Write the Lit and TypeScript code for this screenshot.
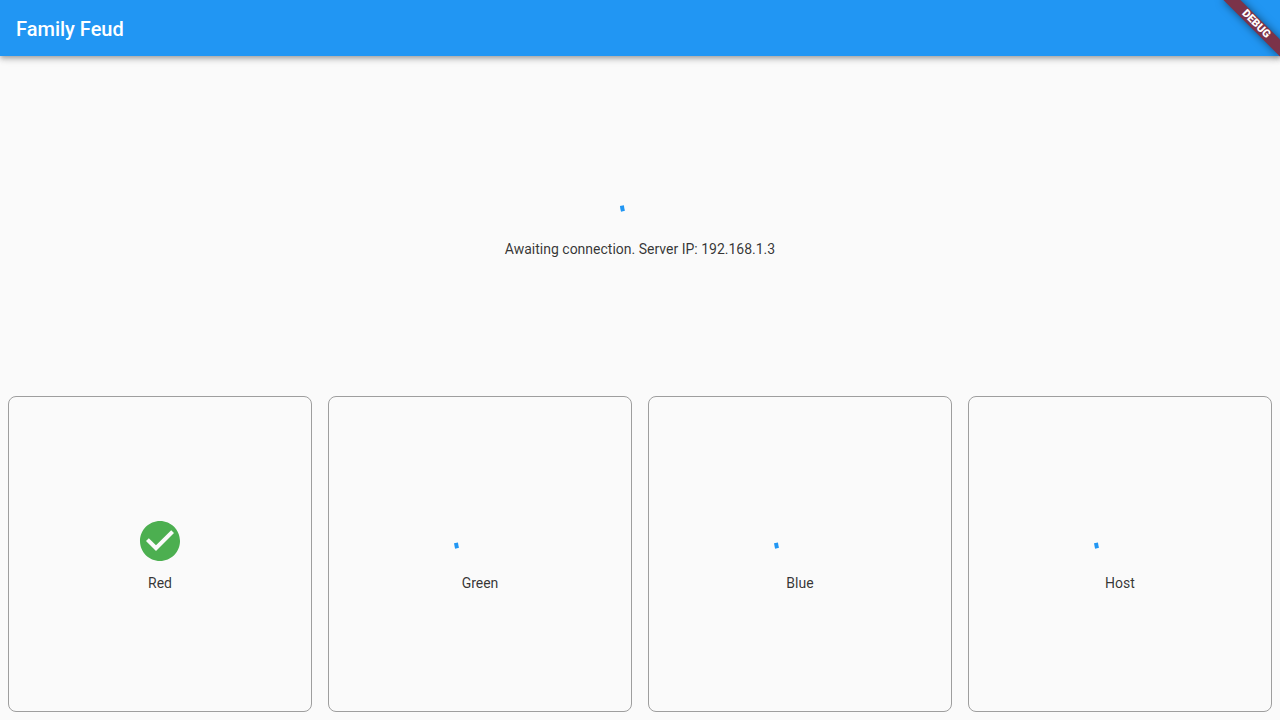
import { LitElement, html, css } from "lit";
import { customElement, property } from "lit/decorators.js";

@customElement("progress-ring")
class ProgressRing extends LitElement {
  @property({ type: Number }) size = 36;
  /** Angle of the arc's middle, in degrees clockwise from three o'clock. */
  @property({ type: Number }) angle = 169;

  static styles = css`
    :host {
      display: block;
      line-height: 0;
    }
    svg {
      overflow: visible;
    }
    path {
      fill: none;
      stroke: #2196f3;
      stroke-width: 4;
      stroke-linecap: square;
    }
  `;

  render() {
    const r = this.size / 2;
    const mid = (this.angle * Math.PI) / 180;
    const half = 0.8 / r;
    const at = (a: number) => `${r + r * Math.cos(a)} ${r + r * Math.sin(a)}`;
    return html`
      <svg
        width=${this.size}
        height=${this.size}
        role="progressbar"
        aria-label="Waiting"
      >
        <path d="M${at(mid - half)}A${r} ${r} 0 0 1 ${at(mid + half)}"></path>
      </svg>
    `;
  }
}

@customElement("player-card")
class PlayerCard extends LitElement {
  @property() name = "";
  @property({ type: Boolean }) connected = false;

  static styles = css`
    :host {
      display: flex;
      flex-direction: column;
      align-items: center;
      justify-content: center;
      gap: 10px;
      box-sizing: border-box;
      border: 1px solid #9e9e9e;
      border-radius: 8px;
    }
    .check {
      display: block;
      fill: #4caf50;
    }
  `;

  render() {
    return html`
      ${this.connected
        ? html`<svg
            class="check"
            width="48"
            height="48"
            viewBox="0 0 24 24"
            role="img"
            aria-label="Connected"
          >
            <path
              d="M12 2C6.48 2 2 6.48 2 12s4.48 10 10 10 10-4.48 10-10S17.52 2 12 2zm-2 15l-5-5 1.41-1.41L10 14.17l7.59-7.59L19 8l-9 9z"
            ></path>
          </svg>`
        : html`<progress-ring size="48"></progress-ring>`}
      <span>${this.name}</span>
    `;
  }
}

@customElement("app-root")
class AppRoot extends LitElement {
  private players = [
    { name: "Red", connected: true },
    { name: "Green", connected: false },
    { name: "Blue", connected: false },
    { name: "Host", connected: false },
  ];

  static styles = css`
    :host {
      position: relative;
      display: flex;
      flex-direction: column;
      min-height: 100vh;
      overflow: hidden;
      background: #fafafa;
      color: rgba(0, 0, 0, 0.8);
      font: 14px/16px Roboto, sans-serif;
    }
    header {
      display: flex;
      align-items: center;
      box-sizing: border-box;
      height: 56px;
      padding: 2px 16px 0;
      background: #2196f3;
      color: #fff;
      box-shadow: 0 2px 4px -1px rgba(0, 0, 0, 0.2),
        0 4px 5px 0 rgba(0, 0, 0, 0.14), 0 1px 10px 0 rgba(0, 0, 0, 0.12);
    }
    h1 {
      margin: 0;
      font-size: 20px;
      line-height: 24px;
      font-weight: 500;
    }
    main {
      flex: 1;
      display: grid;
      grid-template-rows: 1fr 1fr;
    }
    .status {
      display: flex;
      flex-direction: column;
      align-items: center;
      justify-content: center;
      gap: 18px;
    }
    .status p {
      margin: 0;
    }
    .players {
      display: grid;
      grid-template-columns: repeat(4, 1fr);
      gap: 16px;
      padding: 8px;
    }
    .ribbon {
      position: absolute;
      top: 0;
      left: 100%;
      width: 80px;
      height: 12px;
      transform-origin: 0 0;
      transform: rotate(45deg) translate(-40px, 28px);
      background: #7b3349;
      box-shadow: 0 0 8px rgba(0, 0, 0, 0.5);
      color: #fff;
      font-size: 11px;
      line-height: 12px;
      font-weight: 900;
      text-align: center;
    }
  `;

  render() {
    return html`
      <header><h1>Family Feud</h1></header>
      <main>
        <section class="status">
          <progress-ring size="36"></progress-ring>
          <p>Awaiting connection. Server IP: 192.168.1.3</p>
        </section>
        <section class="players">
          ${this.players.map(
            (p) =>
              html`<player-card
                .name=${p.name}
                .connected=${p.connected}
              ></player-card>`
          )}
        </section>
      </main>
      <div class="ribbon">DEBUG</div>
    `;
  }
}
